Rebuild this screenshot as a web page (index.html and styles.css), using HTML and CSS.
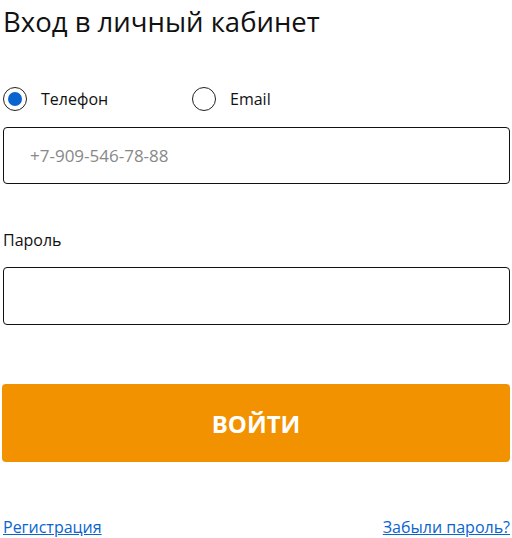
FILE: index.html
```html
<!DOCTYPE html>
<html lang="ru">
<head>
    <meta charset="UTF-8">
    <meta name="viewport" content="width=device-width, initial-scale=1.0">
    <title>Вход в личный кабинет</title>
    <link rel="stylesheet" href="styles.css">
</head>
<body>

<div class="login">
    <h1>Вход в личный кабинет</h1>
    <form id="loginForm">
        <div class="switch">
            <label class="radio">
                <input type="radio" name="type" value="phone" checked>
                <span class="mark"></span>
                Телефон
            </label>
            <label class="radio">
                <input type="radio" name="type" value="email">
                <span class="mark"></span>
                Email
            </label>
        </div>
        <input class="field" type="text" name="login" placeholder="+7-909-546-78-88">

        <label class="field-label" for="password">Пароль</label>
        <input class="field" type="password" id="password" name="password">

        <button type="submit">ВОЙТИ</button>
    </form>
    <div class="links">
        <a href="#">Регистрация</a>
        <a href="#">Забыли пароль?</a>
    </div>
</div>

</body>
</html>
```

FILE: styles.css
```css
body {
    font-family: "Open Sans", "Noto Sans", sans-serif;
    color: #111;
    margin: 0;
    background: #fff;
}
.login {
    padding: 0 2px 0 3px;
}
h1 {
    font-size: 27.5px;
    font-weight: normal;
    margin: 0;
    padding-top: 4px;
    line-height: 36px;
}
.switch {
    display: flex;
    margin-top: 46px;
    height: 26px;
    align-items: center;
}
.radio {
    display: flex;
    align-items: center;
    font-size: 16px;
    width: 189px;
    cursor: pointer;
}
.radio input {
    display: none;
}
.mark {
    width: 22px;
    height: 22px;
    border: 1px solid #222;
    border-radius: 50%;
    margin-right: 14px;
    box-sizing: content-box;
    display: flex;
    align-items: center;
    justify-content: center;
}
.radio input:checked + .mark::after {
    content: "";
    width: 14px;
    height: 14px;
    border-radius: 50%;
    background: #0a64cf;
}
.field {
    display: block;
    width: 100%;
    height: 57px;
    margin-top: 15px;
    padding: 0 26px;
    font-size: 17px;
    font-family: inherit;
    border: 1px solid #111;
    border-radius: 4px;
    box-sizing: border-box;
}
.field::placeholder {
    color: #888;
}
.field-label {
    display: block;
    font-size: 16px;
    margin-top: 44px;
    line-height: 24px;
}
#password {
    margin-top: 15px;
    height: 58px;
}
button {
    display: block;
    width: calc(100% + 1px);
    margin: 59px 0 0 -1px;
    height: 78px;
    background: #f39200;
    color: #fff;
    border: none;
    border-radius: 4px;
    font-family: inherit;
    font-size: 24px;
    font-weight: bold;
    cursor: pointer;
}
.links {
    display: flex;
    justify-content: space-between;
    margin-top: 54px;
    font-size: 16px;
}
.links a {
    color: #0a64cf;
}
```
